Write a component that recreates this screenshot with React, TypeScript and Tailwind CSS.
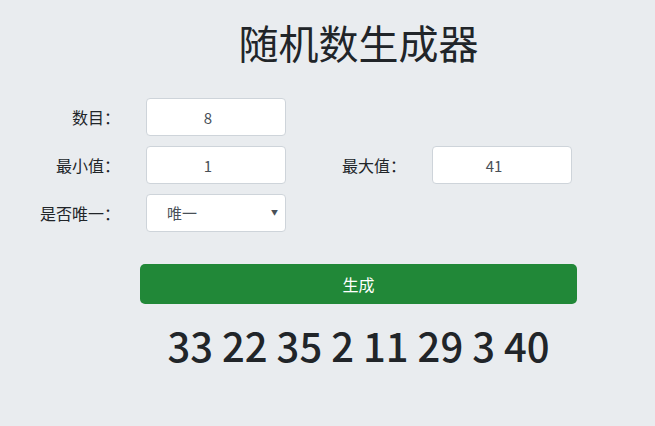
import { useState } from "react";

export default function App() {
  const [count, setCount] = useState("8");
  const [min, setMin] = useState("1");
  const [max, setMax] = useState("41");
  const [unique, setUnique] = useState("唯一");
  const result = [33, 22, 35, 2, 11, 29, 3, 40];

  const font = { fontFamily: '"Noto Sans CJK SC", "Noto Sans", sans-serif' };
  const inputCls =
    "ml-[26px] w-[140px] h-[38px] bg-white border border-[#ced4da] rounded pl-[4px] pr-[20px] text-center text-[15px] text-[#495057] outline-none";

  return (
    <div className="min-h-screen bg-[#e9ecef] text-[#212529]" style={font}>
      <div className="w-[437px] ml-[140px] pt-[18px] text-center">
        <h1 className="text-[40px] leading-[48px] font-normal">随机数生成器</h1>
      </div>

      {/* Form */}
      <div className="mt-[32px] flex flex-col gap-[10px]">
        <div className="flex items-center">
          <label className="w-[120px] text-right text-[16px]">数目：</label>
          <input value={count} onChange={(e) => setCount(e.target.value)} className={inputCls} />
        </div>
        <div className="flex items-center">
          <label className="w-[120px] text-right text-[16px]">最小值：</label>
          <input value={min} onChange={(e) => setMin(e.target.value)} className={inputCls} />
          <label className="w-[120px] text-right text-[16px]">最大值：</label>
          <input value={max} onChange={(e) => setMax(e.target.value)} className={inputCls} />
        </div>
        <div className="flex items-center">
          <label className="w-[120px] text-right text-[16px]">是否唯一：</label>
          <div className="relative ml-[26px] w-[140px] h-[38px]">
            <select
              value={unique}
              onChange={(e) => setUnique(e.target.value)}
              className="appearance-none w-full h-full bg-white border border-[#ced4da] rounded pl-[20px] text-[15px] text-[#495057] outline-none"
            >
              <option>唯一</option>
              <option>不唯一</option>
            </select>
            <span className="pointer-events-none absolute right-[8px] top-[15px] text-[7px] leading-none text-[#495057]">▼</span>
          </div>
        </div>
      </div>

      <div className="w-[437px] ml-[140px] mt-[32px]">
        <button className="w-full h-[40px] rounded-[5px] bg-[#218838] text-white text-[16px]">生成</button>
        <div className="mt-[17px] text-center text-[40px] leading-[48px] font-medium">
          {result.join(" ")}
        </div>
      </div>
    </div>
  );
}
